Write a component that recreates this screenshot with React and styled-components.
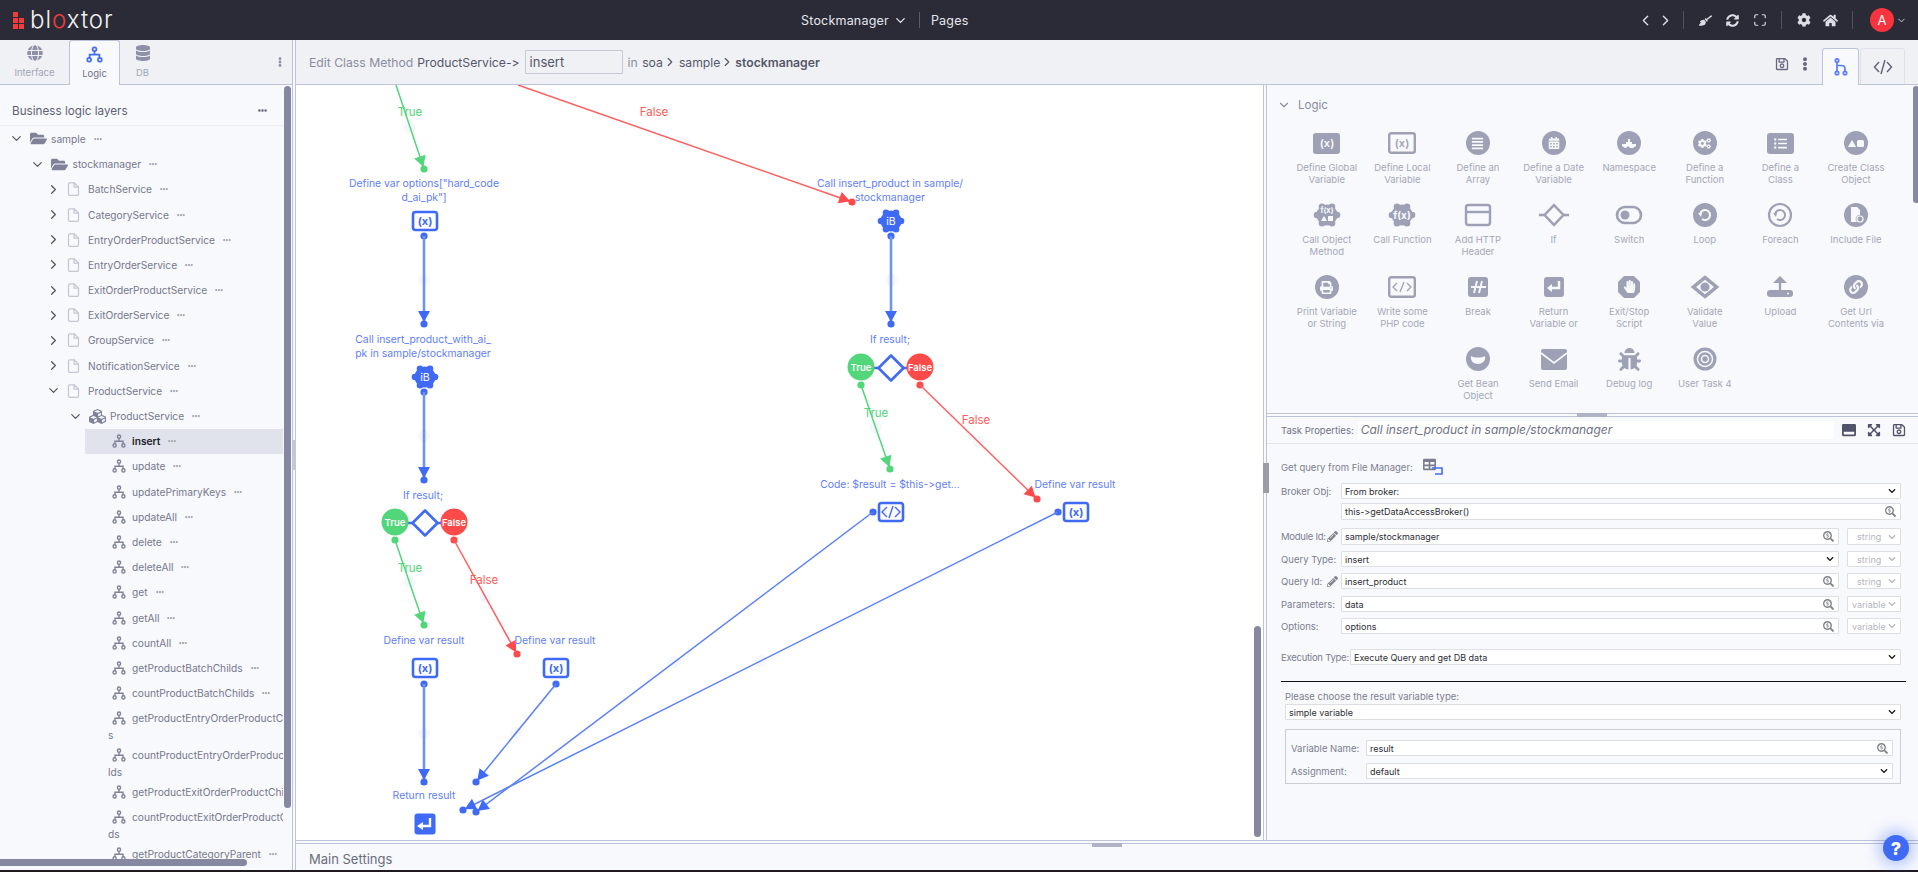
import React from 'react'
import styled, { createGlobalStyle } from 'styled-components'
import {
  FaBroom, FaSyncAlt, FaCog, FaHome, FaGlobe, FaDatabase, FaFolderOpen, FaCubes, FaEllipsisH, FaEllipsisV,
  FaRegSave, FaSearchDollar, FaPencilAlt, FaChevronDown, FaCogs, FaListUl, FaCalendarAlt, FaPrint,
  FaHandPaper, FaBug, FaLink, FaWindowMaximize, FaExpandArrowsAlt, FaTable, FaAlignJustify,
} from 'react-icons/fa'
import { FiChevronLeft, FiChevronRight, FiChevronDown, FiMaximize, FiFile } from 'react-icons/fi'

const BLUE = '#3f6af5'
const GREEN = '#52d67a'
const RED = '#ff4a4a'
const GREY = '#9ea1b5'
const FONT = '"Inter", "Open Sans", sans-serif'

const Global = createGlobalStyle`
  html, body { margin: 0; padding: 0; height: 100%; overflow: hidden; }
  body {
    font-family: ${FONT};
    background: #f8f9fd;
    font-variant-ligatures: none;
    font-feature-settings: "calt" 0, "liga" 0;
  }
  * { box-sizing: border-box; }
`

const Page = styled.div`
  height: 872px;
  display: flex;
  flex-direction: column;
  overflow: hidden;
  position: relative;
`

/* top bar */
const TopBar = styled.header`
  height: 40px;
  flex: none;
  background: #2a2b36;
  display: grid;
  grid-template-columns: 788px auto 1fr;
  align-items: center;
  color: #e6e7ee;
  padding: 0 10px 0 13px;
`
const Logo = styled.div`
  display: flex;
  align-items: center;
  gap: 6px;
`
const LogoMark = styled.div`
  display: grid;
  grid-template-columns: 5px 5px;
  grid-auto-rows: 5px;
  gap: 1px;
  i { background: #f23c3c; display: block; }
  i:first-child { grid-column: 1 / 3; width: 5px; }
`
const LogoText = styled.div`
  font-size: 24px;
  font-weight: 300;
  letter-spacing: 1px;
  color: #f2f2f2;
  line-height: 24px;
  span { color: #f23c3c; }
`
const CenterMenu = styled.div`
  display: flex;
  align-items: center;
  font-size: 12.5px;
  letter-spacing: .2px;
  svg { margin-left: 4px; font-size: 15px; }
`
const MenuSep = styled.div`
  width: 1px;
  height: 16px;
  background: #5b5c68;
  margin: 0 11px;
`
const TopIcons = styled.div`
  justify-self: end;
  display: flex;
  align-items: center;
  color: #dcdde5;
`
const TopIcon = styled.span`
  display: flex;
  width: ${p => p.$w || 27}px;
  justify-content: center;
  font-size: ${p => p.$size || 13}px;
`
const TopSep = styled.div`
  width: 1px;
  height: 18px;
  background: #53545f;
  margin: 0 8px;
`
const Avatar = styled.div`
  width: 24px;
  height: 24px;
  border-radius: 50%;
  background: #f8343f;
  color: #fff;
  font-size: 13px;
  display: flex;
  align-items: center;
  justify-content: center;
  margin-left: 9px;
`

const Body = styled.div`
  flex: 1;
  min-height: 0;
  display: flex;
`
const BottomStrip = styled.div`
  height: 2px;
  flex: none;
  background: #1f1a20;
`

/* left column */
const LeftPanel = styled.aside`
  width: 292px;
  flex: none;
  position: relative;
  overflow: hidden;
  display: flex;
  flex-direction: column;
`
const Tabs = styled.div`
  height: 45px;
  flex: none;
  display: flex;
  background: #f0f1f5;
  border-bottom: 1px solid #bcc3da;
  position: relative;
`
const Tab = styled.div`
  width: ${p => p.$w}px;
  height: ${p => p.$active ? 45 : 44}px;
  display: flex;
  flex-direction: column;
  align-items: center;
  padding-top: 5px;
  font-size: 9.5px;
  color: ${p => p.$active ? '#6d7086' : '#a2a5b6'};
  background: ${p => p.$active ? '#f8f9fd' : 'transparent'};
  border: ${p => p.$active ? '1px solid #bcc3da' : 'none'};
  border-bottom: none;
  border-radius: 3px 3px 0 0;
  span { margin-top: 5px; }
`
const TabIcon = styled.div`
  height: 17px;
  font-size: 16px;
  color: ${p => p.$color || '#8e90a5'};
`
const TabMore = styled.div`
  position: absolute;
  right: 7px;
  top: 17px;
  color: #8b8ea3;
  font-size: 10px;
`
const LayerHead = styled.div`
  height: 41.4px;
  flex: none;
  width: 283px;
  border-bottom: 1px solid #eceef5;
  display: flex;
  align-items: center;
  justify-content: space-between;
  padding: 11px 16px 0 12px;
  font-size: 11.7px;
  color: #5f6275;
  svg { font-size: 9px; color: #6a6d80; }
`
const Tree = styled.div`
  width: 283px;
  flex: 1;
  min-height: 0;
  overflow: hidden;
`
const TreeRow = styled.div`
  min-height: 25.2px;
  margin-left: ${p => p.$left}px;
  padding-left: ${p => p.$pad}px;
  background: ${p => p.$selected ? '#e0e2ec' : 'transparent'};
  font-size: 10.2px;
  line-height: 12px;
  color: ${p => p.$selected ? '#1c1d26' : '#75788d'};
  font-weight: ${p => p.$selected ? 600 : 400};
`
const RowLine = styled.div`
  height: 25.2px;
  display: flex;
  align-items: center;
  white-space: nowrap;
`
const WrapLine = styled.div`
  margin-top: -2px;
  height: 13.8px;
`
const Chevron = styled.span`
  width: 16px;
  flex: none;
  display: flex;
  justify-content: center;
  font-size: 15px;
  color: #55586c;
`
const TreeIcon = styled.span`
  width: ${p => p.$w}px;
  margin-left: ${p => p.$ml}px;
  margin-right: ${p => p.$mr}px;
  flex: none;
  display: flex;
  justify-content: center;
  font-size: ${p => p.$size}px;
  color: ${p => p.$color || '#7f8299'};
`
const More = styled.span`
  margin-left: 8px;
  display: flex;
  font-size: 8px;
  color: #a6a8b8;
`
const VScroll = styled.div`
  position: absolute;
  left: ${p => p.$x}px;
  top: ${p => p.$top}px;
  width: ${p => p.$w}px;
  height: ${p => p.$h}px;
  background: #8588a0;
  border-radius: 4px;
`
const HScroll = styled.div`
  position: absolute;
  left: 0;
  bottom: 4px;
  width: 247px;
  height: 7px;
  background: #8588a0;
  border-radius: 0 4px 4px 0;
`
const VSplit = styled.div`
  width: 4px;
  flex: none;
  border-left: 1px solid #bcc3da;
  border-right: 1px solid #bcc3da;
  background: #f8f9fd;
  position: relative;
`
const VHandle = styled.div`
  position: absolute;
  left: -1px;
  top: ${p => p.$top}px;
  width: 6px;
  height: 30px;
  background: ${p => p.$color};
`

/* centre + right */
const Main = styled.main`
  flex: 1;
  min-width: 0;
  display: flex;
  flex-direction: column;
`
const Toolbar = styled.div`
  height: 45px;
  flex: none;
  background: #f0f1f5;
  border-bottom: 1px solid #bcc3da;
  display: flex;
  align-items: center;
  padding: 0 13px 0 13px;
  font-size: 12.2px;
  color: #8a8da0;
  white-space: nowrap;
`
const Strong = styled.span`
  color: #55576a;
  margin: 0 ${p => p.$mr || 0}px 0 ${p => p.$ml || 0}px;
  font-weight: ${p => p.$bold ? 600 : 400};
`
const NameInput = styled.div`
  width: 98px;
  height: 24px;
  border: 1px solid #c5c8d5;
  border-radius: 1px;
  margin: 0 5px;
  padding: 0 4px;
  line-height: 23px;
  color: #55576a;
  font-size: 13px;
`
const Crumb = styled.span`
  display: flex;
  font-size: 12.2px;
  color: #55576a;
  margin: 0 1px;
  svg { font-size: 14px; }
`
const ToolRight = styled.div`
  margin-left: auto;
  align-self: flex-end;
  display: flex;
  align-items: center;
  color: #666980;
`
const ToolIcon = styled.span`
  display: flex;
  font-size: 14px;
  margin-right: ${p => p.$mr}px;
  margin-bottom: 5px;
`
const ViewTab = styled.div`
  height: ${p => p.$active ? 37 : 36}px;
  margin-bottom: ${p => p.$active ? -1 : 0}px;
  width: ${p => p.$w}px;
  display: flex;
  align-items: center;
  justify-content: center;
  background: ${p => p.$active ? '#f8f9fd' : '#f0f1f5'};
  border: 1px solid ${p => p.$active ? '#bcc3da' : '#dfe1ea'};
  border-bottom: none;
  border-radius: 3px 3px 0 0;
  margin-left: ${p => p.$ml || 0}px;
`
const Work = styled.div`
  flex: 1;
  min-height: 0;
  display: flex;
`
const Canvas = styled.div`
  width: 967px;
  flex: none;
  background: #fff;
  position: relative;
  overflow: hidden;
`
const CanvasSvg = styled.svg`
  position: absolute;
  inset: 0;
  width: 100%;
  height: 100%;
`
const NodeLabel = styled.div`
  position: absolute;
  left: ${p => p.$x - 296}px;
  top: ${p => p.$y - 85}px;
  transform: translate(-50%, -50%);
  width: 170px;
  text-align: center;
  font-size: ${p => p.$color ? 11.5 : 10.4}px;
  line-height: 14px;
  color: ${p => p.$color || '#5f80f8'};
  white-space: pre-line;
`
const Right = styled.div`
  flex: 1;
  min-width: 0;
  display: flex;
  flex-direction: column;
  position: relative;
`
const LogicPane = styled.section`
  height: 328px;
  flex: none;
  padding-top: 13px;
  overflow: hidden;
`
const PaneTitle = styled.div`
  height: 14px;
  display: flex;
  align-items: center;
  padding-left: 10px;
  font-size: 11.5px;
  color: #8a8da0;
  svg { font-size: 14px; margin-right: 7px; }
`
const Grid = styled.div`
  margin: 18px 0 0 22px;
  display: grid;
  grid-template-columns: repeat(8, 75.6px);
  grid-auto-rows: 72px;
`
const Item = styled.div`
  grid-column-start: ${p => p.$start || 'auto'};
  display: flex;
  flex-direction: column;
  align-items: center;
  text-align: center;
  font-size: 9.5px;
  line-height: 12px;
  color: #a5a7b8;
`
const ItemIcon = styled.div`
  width: 34px;
  height: 26px;
  margin-bottom: 6px;
  display: flex;
  align-items: center;
  justify-content: center;
  color: ${GREY};
`
const ItemLabel = styled.div`
  height: 24px;
  overflow: hidden;
  white-space: pre-line;
`
const Round = styled.span`
  width: 24px;
  height: 24px;
  border-radius: 50%;
  background: ${GREY};
  color: #f8f9fd;
  font-size: ${p => p.$size || 12}px;
  display: flex;
  align-items: center;
  justify-content: center;
`
const Square = styled(Round)`
  width: 27px;
  height: 21px;
  border-radius: 3px;
`
const HSplit = styled.div`
  height: 4px;
  flex: none;
  border-top: 1px solid #bcc3da;
  border-bottom: 1px solid #bcc3da;
  position: relative;
`
const HHandle = styled.div`
  position: absolute;
  left: ${p => p.$x}px;
  top: -1px;
  width: 30px;
  height: 4px;
  background: #b0b3c5;
`

/* task properties form */
const TaskHead = styled.div`
  height: 27px;
  flex: none;
  border-bottom: 1px solid #e3e5ec;
  display: flex;
  align-items: center;
  padding: 0 14px 0 14px;
  font-size: 9.5px;
  color: #6e7184;
  white-space: nowrap;
`
const TaskTitle = styled.div`
  width: 476px;
  flex: none;
  height: 18px;
  margin: 0 0 0 4px;
  background: #fff;
  font-size: 12px;
  font-style: italic;
  color: #6e7184;
  line-height: 18px;
  padding-left: 3px;
`
const TaskIcons = styled.div`
  display: flex;
  margin-left: 8px;
  gap: 11px;
  color: #50536a;
  font-size: 14px;
`
const Form = styled.div`
  padding: 0 17px 0 14px;
  font-size: 9.5px;
  color: #7b7e90;
  white-space: nowrap;
`
const Row = styled.div`
  display: flex;
  align-items: center;
  height: ${p => p.$h || 16}px;
  margin-top: ${p => p.$mt}px;
  padding-left: ${p => p.$indent || 0}px;
`
const Label = styled.div`
  width: ${p => p.$w || 60}px;
  flex: none;
  display: flex;
  align-items: center;
  justify-content: space-between;
  padding-right: ${p => p.$pr || 0}px;
  letter-spacing: ${p => p.$tight ? '-.25px' : 0};
  svg { color: #84868f; font-size: 11px; }
`
const Field = styled.div`
  flex: 1;
  height: 100%;
  min-width: 0;
  background: #fff;
  border: 1px solid #dedfe5;
  border-radius: 1px;
  display: flex;
  align-items: center;
  justify-content: space-between;
  padding: 0 4px 0 3px;
  color: #2c2d36;
  font-size: 9px;
  svg { flex: none; }
`
const TypeSelect = styled(Field)`
  flex: none;
  width: 54px;
  margin-left: 8px;
  color: #b4b5bf;
  padding: 0 4px 0 ${p => p.$pad}px;
`
const Rule = styled.hr`
  border: 0;
  height: 1px;
  margin: 16px -5px 0 0;
  background: #111;
`
const Prompt = styled.div`
  margin: 9px 0 1px 4px;
  line-height: 12px;
`
const VarBox = styled.div`
  margin: 9px 0 0 4px;
  height: 55px;
  border: 1px solid #cdced4;
  padding: 10px 7px 0 5px;
`
const SearchIcon = () => <FaSearchDollar size={11} color="#808288" />
const Arrow = () => <FaChevronDown size={8} color="#111" />
const GreyArrow = () => <FaChevronDown size={8} color="#b4b5bf" />

const TopLine = styled.div`
  height: 1px;
  flex: none;
  background: #bcc3da;
  margin-bottom: 2px;
`
const BottomBar = styled.div`
  height: 27px;
  flex: none;
  border-top: 1px solid #bcc3da;
  position: relative;
  font-size: 13px;
  color: #6a6d7e;
  display: flex;
  align-items: center;
  padding: 3px 13px 0;
`
const Help = styled.div`
  position: absolute;
  right: 9px;
  bottom: 9px;
  width: 26px;
  height: 26px;
  border-radius: 50%;
  background: ${BLUE};
  color: #fff;
  font-size: 18px;
  font-weight: 800;
  display: flex;
  align-items: center;
  justify-content: center;
  box-shadow: 0 0 14px 5px rgba(63, 106, 245, .35);
`

/* small drawings */
const LogicGlyph = ({ size = 16, color = 'currentColor' }) => (
  <svg width={size} height={size} viewBox="0 0 16 16" fill="none" stroke={color} strokeWidth="1.6">
    <circle cx="8" cy="3" r="1.8" />
    <circle cx="3" cy="13" r="1.8" />
    <circle cx="13" cy="13" r="1.8" />
    <path d="M8 5v3M3.4 11V8.2h9.2V11" />
  </svg>
)
const BranchGlyph = () => (
  <svg width="14" height="18" viewBox="0 0 14 18" fill="none" stroke="#5a7cf8" strokeWidth="1.7">
    <circle cx="3" cy="2.5" r="1.7" />
    <circle cx="3" cy="15" r="1.7" />
    <circle cx="11" cy="15" r="1.7" />
    <path d="M3 4.2v9M3 7.5h4.5c2.2 0 3.5 1.4 3.5 3.5v2.3" />
  </svg>
)
const CodeGlyph = () => (
  <svg width="20" height="16" viewBox="0 0 20 16" fill="none" stroke="#5f6275" strokeWidth="1.4">
    <path d="M6 3L1.5 8 6 13M14 3l4.5 5-4.5 5M12 1L8 15" />
  </svg>
)
const Svg = ({ children, w = 30, h = 26 }) => (
  <svg width={w} height={h} viewBox={`0 0 ${w} ${h}`}>{children}</svg>
)
const SvgLabel = ({ x, y, size, fill, children, weight = 600 }) => (
  <text x={x} y={y} fontSize={size} fill={fill} fontWeight={weight} textAnchor="middle" fontFamily={FONT}>{children}</text>
)
const gearPoints = [0, 60, 120, 180, 240, 300]
const Gear = ({ cx = 15, cy = 13, fill = GREY }) => (
  <g fill={fill}>
    <circle cx={cx} cy={cy} r="10.5" />
    {gearPoints.map(a => (
      <circle key={a} cx={cx + 10 * Math.cos(a * Math.PI / 180)} cy={cy + 9.5 * Math.sin(a * Math.PI / 180)} r="3.3" />
    ))}
  </g>
)

const glyphs = {
  varSolid: <Square><Svg w={20} h={14}><SvgLabel x={10} y={11} size={11} fill="#f8f9fd">(x)</SvgLabel></Svg></Square>,
  varOutline: <Svg><rect x="2.2" y="3.2" width="25.6" height="19.6" rx="2" fill="none" stroke={GREY} strokeWidth="2.4" /><SvgLabel x={15} y={17} size={11} fill={GREY}>(x)</SvgLabel></Svg>,
  array: <Round $size={13}><FaAlignJustify /></Round>,
  date: <Round $size={12}><FaCalendarAlt /></Round>,
  namespace: <Round><Svg w={18} h={14}><path d="M2 8h4V6h2V3h2v3h2v2h4v2l-3 2h-3l-2-2-2 2H5l-3-2z" fill="#f8f9fd" /></Svg></Round>,
  func: <Round $size={13}><FaCogs /></Round>,
  cls: <Square $size={13}><FaListUl /></Square>,
  object: <Round><Svg w={18} h={12}><path d="M1 10l4-7 4 7z" fill="#f8f9fd" /><rect x="10" y="3" width="7" height="7" rx="1.5" fill="#f8f9fd" /></Svg></Round>,
  callObject: <Svg><Gear /><SvgLabel x={15} y={11} size={7.5} fill="#f8f9fd" weight={700}>f(x)</SvgLabel><path d="M9 19l3-5 3 5z" fill="#f8f9fd" /><rect x="16" y="14" width="5" height="5" fill="#f8f9fd" /></Svg>,
  callFunc: <Svg><Gear /><SvgLabel x={15} y={17} size={10} fill="#f8f9fd" weight={700}>f(x)</SvgLabel></Svg>,
  http: <Svg><rect x="3" y="3" width="24" height="20" rx="2.5" fill="none" stroke={GREY} strokeWidth="2.4" /><path d="M3 10h24" stroke={GREY} strokeWidth="2.4" /></Svg>,
  ifNode: <Svg w={36} h={28}><path d="M18 3.5L28 14 18 24.5 8 14z" fill="none" stroke={GREY} strokeWidth="2.6" /><path d="M2 14h6M28 14h6" stroke={GREY} strokeWidth="2.6" /></Svg>,
  toggle: <Svg><rect x="3" y="5" width="24" height="16" rx="8" fill="none" stroke={GREY} strokeWidth="2.6" /><circle cx="11" cy="13" r="4.5" fill={GREY} /></Svg>,
  loop: <Round><Svg w={16} h={16}><path d="M3 8a5 5 0 1 1 2 4" fill="none" stroke="#f8f9fd" strokeWidth="2" /><path d="M1 6l4 0 -1 4z" fill="#f8f9fd" /></Svg></Round>,
  foreach: <Svg w={26} h={26}><circle cx="13" cy="13" r="11" fill="none" stroke={GREY} strokeWidth="2.2" /><path d="M8 13a5 5 0 1 1 2 4" fill="none" stroke={GREY} strokeWidth="2" /><path d="M6 11h4l-1 4z" fill={GREY} /></Svg>,
  include: <Round><Svg w={16} h={18}><path d="M3 1h6l3 3v5a4 4 0 0 0-3 7H3z" fill="#f8f9fd" /><circle cx="12" cy="13" r="3" fill="none" stroke="#f8f9fd" strokeWidth="1.2" /></Svg></Round>,
  print: <Round $size={13}><FaPrint /></Round>,
  php: <Svg><rect x="2.2" y="3.2" width="25.6" height="19.6" rx="2" fill="none" stroke={GREY} strokeWidth="2.4" /><path d="M10 9l-4 4 4 4M20 9l4 4-4 4M17 8l-4 10" fill="none" stroke={GREY} strokeWidth="1.3" /></Svg>,
  breakNode: <Svg w={24} h={24}><rect x="2" y="2" width="20" height="20" rx="3" fill={GREY} /><path d="M11 6l-3 12M16 6l-3 12M5 12h15" stroke="#f8f9fd" strokeWidth="1.9" /></Svg>,
  returnNode: <Svg w={24} h={24}><rect x="2" y="2" width="20" height="20" rx="3" fill={GREY} /><path d="M17 6v7H8" fill="none" stroke="#f8f9fd" strokeWidth="2.4" /><path d="M10 9l-5 4 5 4z" fill="#f8f9fd" /></Svg>,
  stop: <Svg w={26} h={26}><path d="M8 2h10l6 6v10l-6 6H8l-6-6V8z" fill={GREY} /><foreignObject x="6" y="6" width="14" height="14"><FaHandPaper color="#f8f9fd" size={13} /></foreignObject></Svg>,
  validate: <Svg w={38} h={30}><path d="M19 2l16 13-16 13L3 15z" fill={GREY} /><path d="M19 7l10 8-10 8-10-8z" fill="#f8f9fd" /><circle cx="19" cy="15" r="5" fill={GREY} /></Svg>,
  upload: <Svg w={28} h={26}><rect x="1" y="16" width="26" height="7" rx="3" fill={GREY} /><path d="M14 4v15" stroke={GREY} strokeWidth="2.4" /><path d="M7 9l7-7 7 7z" fill={GREY} /><circle cx="22" cy="19.5" r="1" fill="#f8f9fd" /></Svg>,
  link: <Round $size={14}><FaLink /></Round>,
  bean: <Round><Svg w={16} h={12}><path d="M1 3c3 2 11 2 14 0 1 5-3 8-7 8S0 8 1 3z" fill="#f8f9fd" /></Svg></Round>,
  email: <Svg w={28} h={24}><rect x="1" y="2" width="26" height="21" rx="2" fill={GREY} /><path d="M1 6l13 10L27 6" fill="none" stroke="#f8f9fd" strokeWidth="1.6" /></Svg>,
  debug: <FaBug size={23} />,
  target: <Svg w={26} h={26}><circle cx="13" cy="13" r="11.5" fill={GREY} /><circle cx="13" cy="13" r="7.5" fill="none" stroke="#f8f9fd" strokeWidth="1.5" /><circle cx="13" cy="13" r="3.5" fill="none" stroke="#f8f9fd" strokeWidth="1.5" /></Svg>,
}

const items = [
  ['varSolid', 'Define Global\nVariable'], ['varOutline', 'Define Local\nVariable'], ['array', 'Define an\nArray'],
  ['date', 'Define a Date\nVariable'], ['namespace', 'Namespace'], ['func', 'Define a\nFunction'],
  ['cls', 'Define a\nClass'], ['object', 'Create Class\nObject'], ['callObject', 'Call Object\nMethod'],
  ['callFunc', 'Call Function'], ['http', 'Add HTTP\nHeader'], ['ifNode', 'If'], ['toggle', 'Switch'], ['loop', 'Loop'],
  ['foreach', 'Foreach'], ['include', 'Include File'], ['print', 'Print Variable\nor String'],
  ['php', 'Write some\nPHP code'], ['breakNode', 'Break'], ['returnNode', 'Return\nVariable or\nString'],
  ['stop', 'Exit/Stop\nScript'], ['validate', 'Validate\nValue'], ['upload', 'Upload'], ['link', 'Get Url\nContents via'],
  ['bean', 'Get Bean\nObject', 3], ['email', 'Send Email'], ['debug', 'Debug log'], ['target', 'User Task 4'],
]

const levels = {
  0: { left: 0, pad: 8, chev: true, ml: 4, w: 20, mr: 3, size: 17, icon: <FaFolderOpen /> },
  1: { left: 0, pad: 29.5, chev: true, ml: 4, w: 20, mr: 3, size: 17, icon: <FaFolderOpen /> },
  2: { left: 0, pad: 45.5, chev: true, ml: 4, w: 15, mr: 7.5, size: 16, icon: <FiFile />, color: '#c3c5d4' },
  3: { left: 0, pad: 67, chev: true, ml: 4, w: 20, mr: 3, size: 17, icon: <FaCubes /> },
  4: { left: 85, pad: 23, ml: 3, w: 16, mr: 5, size: 16, icon: <LogicGlyph size={14} /> },
}
const tree = [
  [0, 'sample', 'open'], [1, 'stockmanager', 'open'], [2, 'BatchService'], [2, 'CategoryService'],
  [2, 'EntryOrderProductService'], [2, 'EntryOrderService'], [2, 'ExitOrderProductService'], [2, 'ExitOrderService'],
  [2, 'GroupService'], [2, 'NotificationService'], [2, 'ProductService', 'open'], [3, 'ProductService', 'open'],
  [4, 'insert', null, null, true], [4, 'update'], [4, 'updatePrimaryKeys'], [4, 'updateAll'], [4, 'delete'],
  [4, 'deleteAll'], [4, 'get'], [4, 'getAll'], [4, 'countAll'], [4, 'getProductBatchChilds'], [4, 'countProductBatchChilds'],
  [4, 'getProductEntryOrderProductChild', null, 's'], [4, 'countProductEntryOrderProductChi', null, 'lds'],
  [4, 'getProductExitOrderProductChilds'], [4, 'countProductExitOrderProductChil', null, 'ds'], [4, 'getProductCategoryParent'],
]

const TreeItem = ({ level, name, state, tail, selected }) => {
  const l = levels[level]
  const clipped = name.length > 30
  return (
    <TreeRow $left={l.left} $pad={l.pad} $selected={selected}>
      <RowLine>
        {l.chev && <Chevron>{state === 'open' ? <FiChevronDown /> : <FiChevronRight />}</Chevron>}
        <TreeIcon $w={l.w} $ml={l.ml} $mr={l.mr} $size={l.size} $color={l.color}>{l.icon}</TreeIcon>
        {name}
        {!clipped && <More><FaEllipsisH /></More>}
      </RowLine>
      {tail && <WrapLine>{tail}</WrapLine>}
    </TreeRow>
  )
}

/* flow diagram, in page coordinates */
const ghostFill = '#f5f7fe'
const Link = ({ x1, y1, x2, y2, color, width = 1.5, line }) => {
  const a = Math.atan2(y2 - y1, x2 - x1)
  const tipX = x2 - 2 * Math.cos(a)
  const tipY = y2 - 2 * Math.sin(a)
  const bx = tipX - 11 * Math.cos(a)
  const by = tipY - 11 * Math.sin(a)
  const nx = -Math.sin(a) * 6
  const ny = Math.cos(a) * 6
  return (
    <g>
      <circle cx={(x1 + x2) / 2} cy={(y1 + y2) / 2} r="6" fill={ghostFill} />
      <line x1={x1} y1={y1} x2={x2} y2={y2} stroke={line || color} strokeWidth={width} />
      <polygon points={`${tipX},${tipY} ${bx + nx},${by + ny} ${bx - nx},${by - ny}`} fill={color} />
      <circle cx={x2} cy={y2} r="3.6" fill={color} />
    </g>
  )
}
const Drop = ({ x, y1, y2 }) => (
  <g>
    <circle cx={x} cy={y1} r="3.6" fill={BLUE} />
    <Link x1={x} y1={y1} x2={x} y2={y2} color={BLUE} width={2.6} line="#6f92f7" />
  </g>
)
const VarNode = ({ x, y, text = '(x)' }) => (
  <g>
    <rect x={x - 12} y={y - 9} width="24" height="18" rx="2.5" fill="#fff" stroke={BLUE} strokeWidth="2.6" />
    {text === '(x)'
      ? <SvgLabel x={x} y={y + 4} size={11} fill={BLUE} weight={700}>(x)</SvgLabel>
      : <path d={`M${x - 4} ${y - 5}l-5 5 5 5M${x + 4} ${y - 5}l5 5-5 5M${x + 2} ${y - 6}l-4 12`} fill="none" stroke={BLUE} strokeWidth="1.4" />}
  </g>
)
const CallNode = ({ x, y }) => (
  <g>
    <Gear cx={x} cy={y} fill={BLUE} />
    <SvgLabel x={x} y={y + 4} size={10.5} fill="#fff" weight={400}>iB</SvgLabel>
  </g>
)
const IfNode = ({ x, y }) => (
  <g>
    <path d={`M${x - 22} ${y}h44`} stroke={BLUE} strokeWidth="2.6" />
    <path d={`M${x} ${y - 12.5}L${x + 12.5} ${y} ${x} ${y + 12.5} ${x - 12.5} ${y}z`} fill="#fff" stroke={BLUE} strokeWidth="2.6" strokeLinejoin="round" />
    <circle cx={x - 30} cy={y - 1} r="13.5" fill={GREEN} />
    <circle cx={x + 29} cy={y - 1} r="13.5" fill={RED} />
    <SvgLabel x={x - 30} y={y + 3} size={9.5} fill="#fff">True</SvgLabel>
    <SvgLabel x={x + 29} y={y + 3} size={9.5} fill="#fff">False</SvgLabel>
    <circle cx={x - 30} cy={y + 17} r="3.6" fill={GREEN} />
    <circle cx={x + 29} cy={y + 17} r="3.6" fill={RED} />
  </g>
)

const labels = [
  [424, 191, 'Define var options["hard_code\nd_ai_pk"]'],
  [423, 347, 'Call insert_product_with_ai_\npk in sample/stockmanager'],
  [423, 496, 'If result;'], [424, 641, 'Define var result'], [555, 641, 'Define var result'], [424, 796, 'Return result'],
  [890, 191, 'Call insert_product in sample/\nstockmanager'], [890, 340, 'If result;'],
  [890, 485, 'Code: $result = $this->get...'], [1075, 485, 'Define var result'],
  [410, 112, 'True', GREEN], [654, 112, 'False', '#ff5a5a'], [410, 568, 'True', GREEN], [484, 580, 'False', '#ff5a5a'],
  [876, 413, 'True', GREEN], [976, 420, 'False', '#ff5a5a'],
]

const Diagram = () => (
  <Canvas>
    <CanvasSvg viewBox="296 85 967 755">
      <Link x1={396} y1={85} x2={424} y2={169} color={GREEN} />
      <Link x1={518} y1={85} x2={852} y2={202} color={RED} line="#ff5f5f" />
      <VarNode x={425} y={221} />
      <Drop x={424} y1={236} y2={324} />
      <CallNode x={425} y={377} />
      <Drop x={424} y1={392} y2={480} />
      <IfNode x={425} y={523} />
      <Link x1={395} y1={540} x2={424} y2={625} color={GREEN} />
      <Link x1={454} y1={540} x2={517} y2={654} color={RED} line="#ff5f5f" />
      <VarNode x={425} y={668} />
      <VarNode x={556} y={668} />
      <Drop x={424} y1={684} y2={782} />
      <circle cx={556} cy={684} r="3.6" fill={BLUE} />
      <Link x1={556} y1={684} x2={476} y2={782} color={BLUE} line="#5a7ff6" />
      <rect x="414.5" y="813.5" width="21" height="21" rx="3" fill={BLUE} />
      <path d="M430 818v8h-10" fill="none" stroke="#fff" strokeWidth="2.4" />
      <path d="M423 822l-6 4 6 4z" fill="#fff" />
      <CallNode x={891} y={221} />
      <Drop x={891} y1={236} y2={324} />
      <IfNode x={891} y={368} />
      <Link x1={861} y1={385} x2={890} y2={469} color={GREEN} />
      <Link x1={920} y1={385} x2={1037} y2={499} color={RED} line="#ff5f5f" />
      <VarNode x={891} y={512} text="code" />
      <VarNode x={1076} y={512} />
      <circle cx={873} cy={512} r="3.6" fill={BLUE} />
      <circle cx={1058} cy={512} r="3.6" fill={BLUE} />
      <Link x1={873} y1={512} x2={476} y2={812} color={BLUE} line="#5a7ff6" />
      <Link x1={1058} y1={512} x2={463} y2={810} color={BLUE} line="#5a7ff6" />
    </CanvasSvg>
    {labels.map(([x, y, text, color], i) => (
      <NodeLabel key={i} $x={x} $y={y} $color={color}>{text}</NodeLabel>
    ))}
    <VScroll $x={958} $top={541} $w={7} $h={211} />
  </Canvas>
)

const App = () => (
  <Page>
    <Global />
    <TopBar>
      <Logo>
        <LogoMark><i /><i /><i /><i /><i /></LogoMark>
        <LogoText>bl<span>o</span>xtor</LogoText>
      </Logo>
      <CenterMenu>
        Stockmanager <FiChevronDown />
        <MenuSep />
        Pages
      </CenterMenu>
      <TopIcons>
        <TopIcon $w={20} $size={17}><FiChevronLeft /></TopIcon>
        <TopIcon $w={20} $size={17}><FiChevronRight /></TopIcon>
        <TopSep />
        <TopIcon><FaBroom /></TopIcon>
        <TopIcon><FaSyncAlt /></TopIcon>
        <TopIcon $size={14}><FiMaximize /></TopIcon>
        <TopSep />
        <TopIcon $size={14}><FaCog /></TopIcon>
        <TopIcon $size={15}><FaHome /></TopIcon>
        <TopSep />
        <Avatar>A</Avatar>
        <TopIcon $w={14} $size={11}><FiChevronDown /></TopIcon>
      </TopIcons>
    </TopBar>
    <Body>
      <LeftPanel>
        <Tabs>
          <Tab $w={69}><TabIcon><FaGlobe /></TabIcon><span>Interface</span></Tab>
          <Tab $w={51} $active><TabIcon $color={BLUE}><LogicGlyph size={17} /></TabIcon><span>Logic</span></Tab>
          <Tab $w={45}><TabIcon><FaDatabase /></TabIcon><span>DB</span></Tab>
          <TabMore><FaEllipsisV /></TabMore>
        </Tabs>
        <LayerHead>Business logic layers <FaEllipsisH /></LayerHead>
        <Tree>
          {tree.map(([level, name, state, tail, selected], i) => (
            <TreeItem key={i} level={level} name={name} state={state} tail={tail} selected={selected} />
          ))}
        </Tree>
        <VScroll $x={284} $top={46} $w={7} $h={722} />
        <HScroll />
      </LeftPanel>
      <VSplit><VHandle $top={400} $color="#c5c7d2" /></VSplit>
      <Main>
        <Toolbar>
          Edit Class Method
          <Strong $ml={4}>ProductService-&gt;</Strong>
          <NameInput>insert</NameInput>
          in
          <Crumb>&nbsp;soa<FiChevronRight /></Crumb>
          <Crumb>sample<FiChevronRight /></Crumb>
          <Strong $bold>stockmanager</Strong>
          <ToolRight>
            <ToolIcon $mr={9}><FaRegSave /></ToolIcon>
            <ToolIcon $mr={10}><FaEllipsisV /></ToolIcon>
            <ViewTab $w={37} $active><BranchGlyph /></ViewTab>
            <ViewTab $w={45} $ml={1}><CodeGlyph /></ViewTab>
          </ToolRight>
        </Toolbar>
        <Work>
          <Diagram />
          <VSplit><VHandle $top={378} $color="#9a9ca6" /></VSplit>
          <Right>
            <LogicPane>
              <PaneTitle><FiChevronDown />Logic</PaneTitle>
              <Grid>
                {items.map(([icon, label, start]) => (
                  <Item key={label} $start={start}>
                    <ItemIcon>{glyphs[icon]}</ItemIcon>
                    <ItemLabel>{label}</ItemLabel>
                  </Item>
                ))}
              </Grid>
            </LogicPane>
            <VScroll $x={646} $top={1} $w={6} $h={117} />
            <HSplit><HHandle $x={310} /></HSplit>
            <TaskHead>
              Task Properties:
              <TaskTitle>Call insert_product in sample/stockmanager</TaskTitle>
              <TaskIcons>
                <FaWindowMaximize style={{ transform: 'scaleY(-1)' }} />
                <FaExpandArrowsAlt />
                <FaRegSave />
              </TaskIcons>
            </TaskHead>
            <Form>
              <Row $mt={15}>
                Get query from File Manager:
                <svg width="24" height="18" viewBox="0 0 24 18" style={{ marginLeft: 10 }}>
                  <foreignObject x="0" y="0" width="14" height="14"><FaTable size={13} color="#7b7e90" /></foreignObject>
                  <path d="M9 10h10v6h-7" fill="none" stroke={BLUE} strokeWidth="1.6" />
                </svg>
              </Row>
              <Row $mt={8}>
                <Label>Broker Obj:</Label>
                <Field>From broker: <Arrow /></Field>
              </Row>
              <Row $mt={4} $h={17} $indent={60}>
                <Field>this-&gt;getDataAccessBroker() <SearchIcon /></Field>
              </Row>
              <Row $mt={8} $h={17}>
                <Label $pr={3} $tight>Module Id: <FaPencilAlt /></Label>
                <Field>sample/stockmanager <SearchIcon /></Field>
                <TypeSelect $pad={9}>string <GreyArrow /></TypeSelect>
              </Row>
              <Row $mt={6}>
                <Label>Query Type:</Label>
                <Field>insert <Arrow /></Field>
                <TypeSelect $pad={9}>string <GreyArrow /></TypeSelect>
              </Row>
              <Row $mt={6}>
                <Label $pr={3}>Query Id: <FaPencilAlt /></Label>
                <Field>insert_product <SearchIcon /></Field>
                <TypeSelect $pad={9}>string <GreyArrow /></TypeSelect>
              </Row>
              <Row $mt={7}>
                <Label>Parameters:</Label>
                <Field>data <SearchIcon /></Field>
                <TypeSelect $pad={4}>variable <GreyArrow /></TypeSelect>
              </Row>
              <Row $mt={6}>
                <Label>Options:</Label>
                <Field>options <SearchIcon /></Field>
                <TypeSelect $pad={4}>variable <GreyArrow /></TypeSelect>
              </Row>
              <Row $mt={15}>
                <Label $w={69} $tight>Execution Type:</Label>
                <Field>Execute Query and get DB data <Arrow /></Field>
              </Row>
              <Rule />
              <Prompt>Please choose the result variable type:</Prompt>
              <Row $mt={0} $indent={4}>
                <Field>simple variable <Arrow /></Field>
              </Row>
              <VarBox>
                <Row $mt={0}>
                  <Label $w={75}>Variable Name:</Label>
                  <Field>result <SearchIcon /></Field>
                </Row>
                <Row $mt={7}>
                  <Label $w={75}>Assignment:</Label>
                  <Field>default <Arrow /></Field>
                </Row>
              </VarBox>
            </Form>
          </Right>
        </Work>
        <TopLine />
        <BottomBar>
          Main Settings
          <HHandle $x={796} />
          <Help>?</Help>
        </BottomBar>
      </Main>
    </Body>
    <BottomStrip />
  </Page>
)

export default App
